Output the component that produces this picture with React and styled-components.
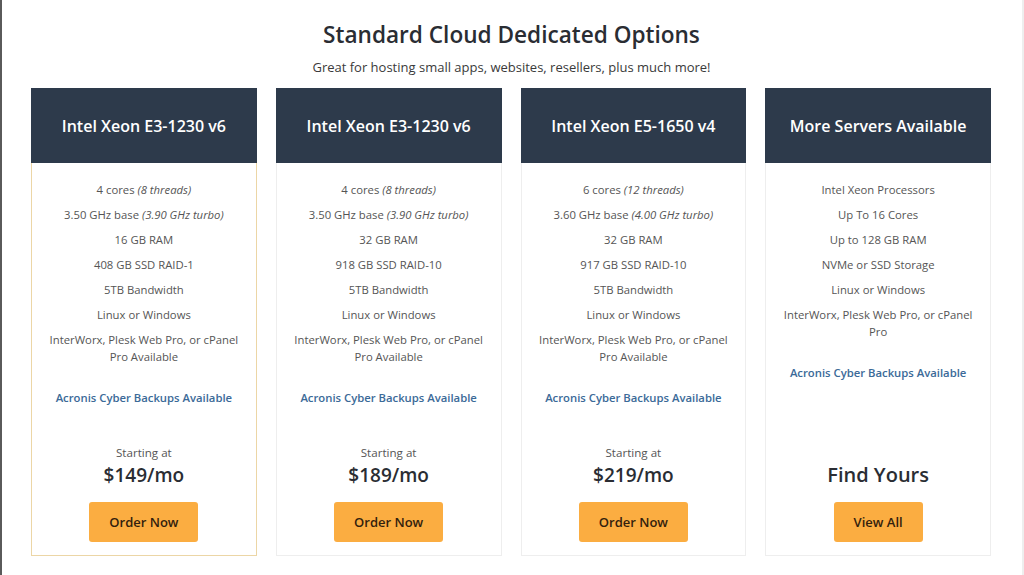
import React from 'react';
import styled, { createGlobalStyle } from 'styled-components';

const GlobalStyle = createGlobalStyle`
  body {
    margin: 0;
    background: #fff;
    font-family: "Open Sans", "Noto Sans", sans-serif;
  }
`;

const Page = styled.div`
  width: 1024px;
  height: 575px;
  box-sizing: border-box;
  border-left: 2px solid #5a5a5a;
  border-right: 2px solid #eeeeee;
  padding: 19px 0 0 29px;
  overflow: hidden;
`;

const Heading = styled.header`
  width: 961px;
  text-align: center;
`;

const Title = styled.h2`
  margin: 0;
  color: #2a2d33;
  font-weight: 600;
  font-size: 22.6px;
  line-height: 31px;
`;

const Subtitle = styled.p`
  margin: 7px 0 0;
  color: #3a3a3a;
  font-size: 13px;
  line-height: 20px;
`;

const Grid = styled.div`
  margin-top: 11px;
  width: 960px;
  display: grid;
  grid-template-columns: repeat(4, 1fr);
  gap: 19px;
`;

const Card = styled.div`
  display: flex;
  flex-direction: column;
  box-sizing: border-box;
  border: 1px solid ${p => (p.featured ? '#ecd6a6' : '#eeeeee')};
  min-height: 468px;
  text-align: center;
`;

const CardHead = styled.div`
  background: #2d3a4b;
  color: #fff;
  height: 75px;
  display: flex;
  align-items: center;
  justify-content: center;
  font-weight: 600;
  font-size: 16px;
  margin: -1px -1px 0;
`;

const Features = styled.ul`
  list-style: none;
  margin: 0;
  padding: 18px 15px 0;
`;

const Feature = styled.li`
  color: #555;
  font-size: 11.3px;
  line-height: 17px;
  & + & {
    margin-top: 8px;
  }
  em {
    font-style: italic;
  }
`;

const Backup = styled.div`
  margin-top: 24px;
  color: #3b6a98;
  font-weight: 600;
  font-size: 11.3px;
  line-height: 17px;
`;

const Footer = styled.div`
  margin-top: auto;
  padding: 30px 0 13px;
  display: flex;
  flex-direction: column;
  align-items: center;
`;

const Starting = styled.div`
  color: #555;
  font-size: 11.6px;
  line-height: 17px;
`;

const Price = styled.div`
  margin-top: 1px;
  color: #2a2d33;
  font-weight: 600;
  font-size: ${p => p.size || 19}px;
  line-height: 26px;
`;

const Button = styled.a`
  margin-top: 14px;
  width: 109px;
  height: 40px;
  display: flex;
  align-items: center;
  justify-content: center;
  background: #fbad41;
  border-radius: 3px;
  color: #33210d;
  font-weight: 600;
  font-size: 13px;
  text-decoration: none;
  cursor: pointer;
`;

const ViewButton = styled(Button)`
  width: 89px;
`;

const plans = [
  {
    name: 'Intel Xeon E3-1230 v6',
    cores: '4 cores', threads: '(8 threads)',
    base: '3.50 GHz base', turbo: '(3.90 GHz turbo)',
    ram: '16 GB RAM', disk: '408 GB SSD RAID-1',
    price: '$149/mo', featured: true,
  },
  {
    name: 'Intel Xeon E3-1230 v6',
    cores: '4 cores', threads: '(8 threads)',
    base: '3.50 GHz base', turbo: '(3.90 GHz turbo)',
    ram: '32 GB RAM', disk: '918 GB SSD RAID-10',
    price: '$189/mo',
  },
  {
    name: 'Intel Xeon E5-1650 v4',
    cores: '6 cores', threads: '(12 threads)',
    base: '3.60 GHz base', turbo: '(4.00 GHz turbo)',
    ram: '32 GB RAM', disk: '917 GB SSD RAID-10',
    price: '$219/mo',
  },
];

const PlanCard = ({ plan }) => (
  <Card featured={plan.featured}>
    <CardHead>{plan.name}</CardHead>
    <Features>
      <Feature>{plan.cores} <em>{plan.threads}</em></Feature>
      <Feature>{plan.base} <em>{plan.turbo}</em></Feature>
      <Feature>{plan.ram}</Feature>
      <Feature>{plan.disk}</Feature>
      <Feature>5TB Bandwidth</Feature>
      <Feature>Linux or Windows</Feature>
      <Feature>InterWorx, Plesk Web Pro, or cPanel Pro Available</Feature>
    </Features>
    <Backup>Acronis Cyber Backups Available</Backup>
    <Footer>
      <Starting>Starting at</Starting>
      <Price>{plan.price}</Price>
      <Button>Order Now</Button>
    </Footer>
  </Card>
);

export default function App() {
  return (
    <>
      <GlobalStyle />
      <Page>
        <Heading>
          <Title>Standard Cloud Dedicated Options</Title>
          <Subtitle>Great for hosting small apps, websites, resellers, plus much more!</Subtitle>
        </Heading>
        <Grid>
          {plans.map((p, i) => <PlanCard key={i} plan={p} />)}
          <Card>
            <CardHead>More Servers Available</CardHead>
            <Features>
              <Feature>Intel Xeon Processors</Feature>
              <Feature>Up To 16 Cores</Feature>
              <Feature>Up to 128 GB RAM</Feature>
              <Feature>NVMe or SSD Storage</Feature>
              <Feature>Linux or Windows</Feature>
              <Feature>InterWorx, Plesk Web Pro, or cPanel Pro</Feature>
            </Features>
            <Backup>Acronis Cyber Backups Available</Backup>
            <Footer>
              <Price size={20}>Find Yours</Price>
              <ViewButton>View All</ViewButton>
            </Footer>
          </Card>
        </Grid>
      </Page>
    </>
  );
}
